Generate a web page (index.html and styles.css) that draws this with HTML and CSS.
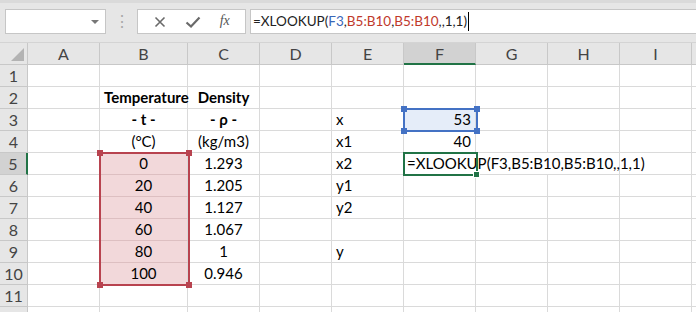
FILE: index.html
```html
<!DOCTYPE html>
<html>
  <head>
    <title>XLOOKUP</title>
    <link rel="stylesheet" href="styles.css">
  </head>
  <body>

    <div class="toolbar">
      <div class="name-box">
        <span class="drop-arrow"></span>
      </div>
      <div class="grip">&#8942;</div>
      <div class="fx-box">
        <svg class="tool-icon" width="14" height="14" viewBox="0 0 14 14">
          <path d="M2.5 2.5 L11.5 11.5 M11.5 2.5 L2.5 11.5" stroke="#6a6a6a" stroke-width="1.6" fill="none"/>
        </svg>
        <svg class="tool-icon" width="16" height="14" viewBox="0 0 16 14">
          <path d="M1.5 7.5 L6 11.5 L14.5 2.5" stroke="#6a6a6a" stroke-width="2.2" fill="none"/>
        </svg>
        <span class="fx">fx</span>
      </div>
      <div class="formula-box">
        <span>=XLOOKUP(</span><span class="ref-blue">F3</span><span>,</span><span class="ref-red">B5:B10</span><span>,</span><span class="ref-red">B5:B10</span><span>,,1,1)</span><span class="caret"></span>
      </div>
    </div>

    <div class="sheet">
      <div class="corner"><span class="corner-tri"></span></div>
      <div class="col-head">A</div>
      <div class="col-head">B</div>
      <div class="col-head">C</div>
      <div class="col-head">D</div>
      <div class="col-head">E</div>
      <div class="col-head active">F</div>
      <div class="col-head">G</div>
      <div class="col-head">H</div>
      <div class="col-head">I</div>
      <div class="col-head"></div>

      <div class="row-head">1</div>
      <div class="cell"></div><div class="cell"></div><div class="cell"></div><div class="cell"></div><div class="cell"></div><div class="cell"></div><div class="cell"></div><div class="cell"></div><div class="cell"></div><div class="cell"></div>

      <div class="row-head">2</div>
      <div class="cell"></div><div class="cell center bold">Temperature</div><div class="cell center bold">Density</div><div class="cell"></div><div class="cell"></div><div class="cell"></div><div class="cell"></div><div class="cell"></div><div class="cell"></div><div class="cell"></div>

      <div class="row-head">3</div>
      <div class="cell"></div><div class="cell center bold">- t -</div><div class="cell center bold">- ρ -</div><div class="cell"></div><div class="cell">x</div><div class="cell right sel-blue">53</div><div class="cell"></div><div class="cell"></div><div class="cell"></div><div class="cell"></div>

      <div class="row-head">4</div>
      <div class="cell"></div><div class="cell center">(°C)</div><div class="cell center">(kg/m3)</div><div class="cell"></div><div class="cell">x1</div><div class="cell right">40</div><div class="cell"></div><div class="cell"></div><div class="cell"></div><div class="cell"></div>

      <div class="row-head active">5</div>
      <div class="cell"></div><div class="cell center sel-red">0</div><div class="cell center">1.293</div><div class="cell"></div><div class="cell">x2</div><div class="cell span3 formula-cell">=XLOOKUP(F3,B5:B10,B5:B10,,1,1)</div><div class="cell"></div><div class="cell"></div>

      <div class="row-head">6</div>
      <div class="cell"></div><div class="cell center sel-red">20</div><div class="cell center">1.205</div><div class="cell"></div><div class="cell">y1</div><div class="cell"></div><div class="cell"></div><div class="cell"></div><div class="cell"></div><div class="cell"></div>

      <div class="row-head">7</div>
      <div class="cell"></div><div class="cell center sel-red">40</div><div class="cell center">1.127</div><div class="cell"></div><div class="cell">y2</div><div class="cell"></div><div class="cell"></div><div class="cell"></div><div class="cell"></div><div class="cell"></div>

      <div class="row-head">8</div>
      <div class="cell"></div><div class="cell center sel-red">60</div><div class="cell center">1.067</div><div class="cell"></div><div class="cell"></div><div class="cell"></div><div class="cell"></div><div class="cell"></div><div class="cell"></div><div class="cell"></div>

      <div class="row-head">9</div>
      <div class="cell"></div><div class="cell center sel-red">80</div><div class="cell center">1</div><div class="cell"></div><div class="cell">y</div><div class="cell"></div><div class="cell"></div><div class="cell"></div><div class="cell"></div><div class="cell"></div>

      <div class="row-head">10</div>
      <div class="cell"></div><div class="cell center sel-red">100</div><div class="cell center">0.946</div><div class="cell"></div><div class="cell"></div><div class="cell"></div><div class="cell"></div><div class="cell"></div><div class="cell"></div><div class="cell"></div>

      <div class="row-head">11</div>
      <div class="cell"></div><div class="cell"></div><div class="cell"></div><div class="cell"></div><div class="cell"></div><div class="cell"></div><div class="cell"></div><div class="cell"></div><div class="cell"></div><div class="cell"></div>

      <div class="row-head"></div>
      <div class="cell"></div><div class="cell"></div><div class="cell"></div><div class="cell"></div><div class="cell"></div><div class="cell"></div><div class="cell"></div><div class="cell"></div><div class="cell"></div><div class="cell"></div>

      <!-- highlight boxes over the grid -->
      <div class="range range-red">
        <span class="handle tl"></span><span class="handle tr"></span><span class="handle bl"></span><span class="handle br"></span>
      </div>
      <div class="range range-blue">
        <span class="handle tl"></span><span class="handle tr"></span><span class="handle bl"></span><span class="handle br"></span>
      </div>
      <div class="active-cell"><span class="fill-handle"></span></div>
    </div>

  </body>
</html>
```

FILE: styles.css
```css
body {
  margin: 0;
  background-color: #fff;
  font-family: Lato, "Liberation Sans", sans-serif;
  color: #000;
  overflow: hidden;
}

/* formula bar */

.toolbar {
  display: flex;
  align-items: flex-start;
  height: 43px;
  padding: 9px 0 0 5px;
  box-sizing: border-box;
  background-color: #e6e6e6;
  border-top: 3px solid #dadada;
  border-bottom: 1px solid #d4d4d4;
  overflow: hidden;
}

.name-box {
  position: relative;
  width: 101px;
  height: 25px;
  margin-top: -3px;
  box-sizing: border-box;
  background-color: #fff;
  border: 1px solid #c6c6c6;
}

.drop-arrow {
  position: absolute;
  right: 6px;
  top: 10px;
  border-left: 4px solid transparent;
  border-right: 4px solid transparent;
  border-top: 4px solid #777;
}

.grip {
  width: 31px;
  margin-top: -1px;
  text-align: center;
  color: #a8a8a8;
  font-size: 16px;
  line-height: 20px;
}

.fx-box {
  display: flex;
  align-items: center;
  justify-content: space-around;
  width: 109px;
  height: 25px;
  margin-top: -3px;
  box-sizing: border-box;
  padding: 0 6px;
  background-color: #fff;
  border: 1px solid #c6c6c6;
}

.fx {
  font-family: "Liberation Serif", serif;
  font-style: italic;
  font-size: 14px;
  color: #555;
  padding-bottom: 2px;
}

.formula-box {
  position: relative;
  flex: 1;
  height: 25px;
  margin: -3px 0 0 4px;
  box-sizing: border-box;
  padding-left: 2px;
  background-color: #fff;
  border: 1px solid #c6c6c6;
  border-right: none;
  font-size: 13.5px;
  line-height: 23px;
  color: #222;
  white-space: nowrap;
}

.ref-blue {
  color: #3a67b8;
}

.ref-red {
  color: #c0392b;
}

.caret {
  display: inline-block;
  width: 1px;
  height: 19px;
  margin-left: 1px;
  vertical-align: -5px;
  background-color: #000;
}

/* sheet grid */

.sheet {
  position: relative;
  display: grid;
  grid-template-columns: 28px 72px 88px repeat(8, 72px);
  grid-template-rows: repeat(13, 22px);
  width: 696px;
  height: 269px;
  overflow: hidden;
  font-size: 15px;
}

.corner,
.col-head,
.row-head {
  background-color: #e6e6e6;
  color: #444;
  box-sizing: border-box;
  border-right: 1px solid #c8c8c8;
  border-bottom: 1px solid #c8c8c8;
  line-height: 21px;
  text-align: center;
}

.corner {
  position: relative;
}

.corner-tri {
  position: absolute;
  right: 3px;
  bottom: 3px;
  border-left: 13px solid transparent;
  border-bottom: 13px solid #b3b3b3;
}

.row-head {
  font-size: 16px;
}

.col-head {
  font-size: 16px;
}

.col-head.active {
  background-color: #d2d2d2;
  border-bottom: 2px solid #217346;
}

.row-head.active {
  background-color: #d2d2d2;
  border-right: 2px solid #217346;
}

.cell {
  box-sizing: border-box;
  border-right: 1px solid #dadada;
  border-bottom: 1px solid #dadada;
  padding: 0 4px;
  line-height: 21px;
  white-space: nowrap;
}

.center {
  text-align: center;
}

.right {
  text-align: right;
}

.bold {
  font-weight: bold;
}

.sel-red {
  background-color: #f2d8da;
  border-bottom-color: #ddbfc1;
}

.sel-blue {
  background-color: #e5edf9;
}

.span3 {
  grid-column: span 3;
}

.formula-cell {
  padding-left: 3px;
  font-size: 15px;
}

/* range highlights */

.range {
  position: absolute;
  box-sizing: border-box;
  border: 2px solid;
}

.range-red {
  left: 99px;
  top: 109px;
  width: 91px;
  height: 134px;
  border-color: #b8434f;
}

.range-blue {
  left: 403px;
  top: 65px;
  width: 75px;
  height: 24px;
  border-color: #4472c4;
}

.handle {
  position: absolute;
  width: 6px;
  height: 6px;
}

.range-red .handle {
  background-color: #b8434f;
}

.range-blue .handle {
  background-color: #4472c4;
}

.tl { left: -4px; top: -4px; }
.tr { right: -4px; top: -4px; }
.bl { left: -4px; bottom: -4px; }
.br { right: -4px; bottom: -4px; }

.active-cell {
  position: absolute;
  left: 403px;
  top: 109px;
  width: 75px;
  height: 24px;
  box-sizing: border-box;
  border: 2px solid #217346;
}

.fill-handle {
  position: absolute;
  right: -4px;
  bottom: -4px;
  width: 5px;
  height: 5px;
  background-color: #217346;
  border: 1px solid #fff;
}
```
